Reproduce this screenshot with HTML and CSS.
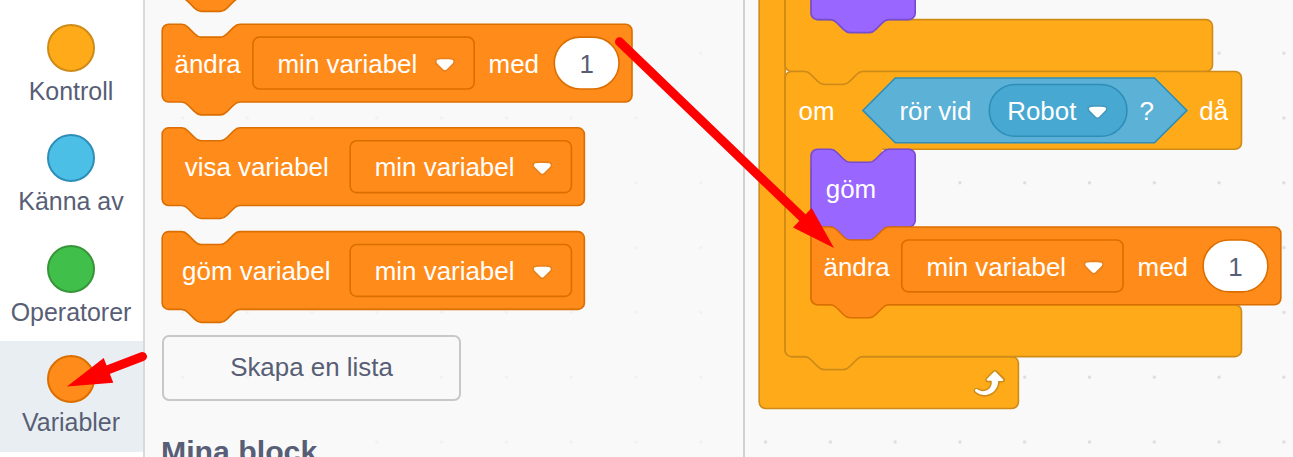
FILE: index.html
```html
<!DOCTYPE html>
<html lang="sv">
<head>
<meta charset="utf-8">
<title>Scratch</title>
<link rel="stylesheet" href="styles.css">
</head>
<body>
<svg class="defs" width="0" height="0" aria-hidden="true">
  <defs>
    <g id="arrow">
      <path class="arrow-edge" d="M12.71,2.44A2.41,2.41,0,0,1,12,4.16L8.08,8.08a2.45,2.45,0,0,1-3.45,0L0.72,4.16A2.42,2.42,0,0,1,0,2.44,2.48,2.48,0,0,1,.71.71C1,0.47,1.43,0,6.36,0S11.75,0.46,12,.71A2.44,2.44,0,0,1,12.71,2.44Z"/>
      <path class="arrow-fill" d="M6.36,7.79a1.43,1.43,0,0,1-1-.42L1.42,3.45a1.44,1.44,0,0,1,0-2c0.56-.56,9.31-0.56,9.87,0a1.44,1.44,0,0,1,0,2L7.37,7.37A1.43,1.43,0,0,1,6.36,7.79Z"/>
    </g>
    <path id="wide" d="M0,4A4,4 0 0,1 4,0H12c2,0 3,1 4,2l4,4c1,1 2,2 4,2h12c2,0 3,-1 4,-2l4,-4c1,-1 2,-2 4,-2H286a4,4 0 0,1 4,4v40a4,4 0 0,1 -4,4H48c-2,0 -3,1 -4,2l-4,4c-1,1 -2,2 -4,2h-12c-2,0 -3,-1 -4,-2l-4,-4c-1,-1 -2,-2 -4,-2H4a4,4 0 0,1 -4,-4z"/>
    <path id="medium" d="M0,4A4,4 0 0,1 4,0H12c2,0 3,1 4,2l4,4c1,1 2,2 4,2h12c2,0 3,-1 4,-2l4,-4c1,-1 2,-2 4,-2H256.6a4,4 0 0,1 4,4v40a4,4 0 0,1 -4,4H48c-2,0 -3,1 -4,2l-4,4c-1,1 -2,2 -4,2h-12c-2,0 -3,-1 -4,-2l-4,-4c-1,-1 -2,-2 -4,-2H4a4,4 0 0,1 -4,-4z"/>
    <path id="small" d="M0,4A4,4 0 0,1 4,0H12c2,0 3,1 4,2l4,4c1,1 2,2 4,2h12c2,0 3,-1 4,-2l4,-4c1,-1 2,-2 4,-2H60.3a4,4 0 0,1 4,4v40a4,4 0 0,1 -4,4H48c-2,0 -3,1 -4,2l-4,4c-1,1 -2,2 -4,2h-12c-2,0 -3,-1 -4,-2l-4,-4c-1,-1 -2,-2 -4,-2H4a4,4 0 0,1 -4,-4z"/>
  </defs>
</svg>

<main class="editor">
  <nav class="categories">
    <div class="category"><span class="bubble control"></span><span class="name">Kontroll</span></div>
    <div class="category"><span class="bubble sensing"></span><span class="name">Känna av</span></div>
    <div class="category"><span class="bubble operators"></span><span class="name">Operatorer</span></div>
    <div class="category selected"><span class="bubble variables"></span><span class="name">Variabler</span></div>
  </nav>

  <section class="palette">
    <svg class="block clipped" width="480" height="23">
      <g transform="translate(1.2 -79.4) scale(1.62)"><use href="#wide" class="data"/></g>
    </svg>
    <svg class="block" width="480" height="104">
      <g transform="translate(1.2 1.2) scale(1.62)">
        <use href="#wide" class="data"/>
        <text x="7.6" y="30">ändra</text>
        <rect class="data" x="56" y="8" width="136.6" height="32" rx="4"/>
        <text x="71.2" y="30">min variabel</text>
        <use href="#arrow" transform="translate(168.3 20.7) scale(.98)"/>
        <text x="201.5" y="30">med</text>
        <rect class="input" x="242" y="8" width="40" height="32" rx="16"/>
        <text class="value" x="262" y="30">1</text>
      </g>
    </svg>
    <svg class="block" width="480" height="104">
      <g transform="translate(1.2 .8) scale(1.62)">
        <use href="#medium" class="data"/>
        <text x="13.9" y="30">visa variabel</text>
        <rect class="data" x="116" y="8" width="136.6" height="32" rx="4"/>
        <text x="131.2" y="30">min variabel</text>
        <use href="#arrow" transform="translate(228.4 20.7) scale(.98)"/>
      </g>
    </svg>
    <svg class="block" width="480" height="103">
      <g transform="translate(1.2 .6) scale(1.62)">
        <use href="#medium" class="data"/>
        <text x="12.3" y="30">göm variabel</text>
        <rect class="data" x="116" y="8" width="136.6" height="32" rx="4"/>
        <text x="131.2" y="30">min variabel</text>
        <use href="#arrow" transform="translate(228.4 20.7) scale(.98)"/>
      </g>
    </svg>
    <button class="make-list">Skapa en lista</button>
    <h2 class="heading">Mina block</h2>
  </section>

  <section class="workspace">
    <svg class="script" width="548" height="457">
      <g transform="translate(14.2 71.5) scale(1.62)">
        <path class="ctl" d="M0,-60V204a4,4 0 0,0 4,4H156a4,4 0 0,0 4,-4V180a4,4 0 0,0 -4,-4H20a4,4 0 0,1 -4,-4V-60z"/>
        <g transform="translate(128.3 180)">
          <path class="loop-edge" d="M23.3,11c-0.3,0.6-0.9,1-1.5,1h-1.6c-0.1,1.3-0.5,2.5-1.1,3.6c-0.9,1.7-2.3,3.2-4.1,4.1c-1.7,0.9-3.6,1.2-5.5,0.9c-1.8-0.3-3.5-1.1-4.9-2.3c-0.7-0.7-0.7-1.9,0-2.6c0.6-0.6,1.6-0.7,2.3-0.2H7c0.9,0.6,1.9,0.9,2.9,0.9s1.9-0.3,2.7-0.9c1.1-0.8,1.8-2.1,1.8-3.5h-1.5c-0.9,0-1.7-0.7-1.7-1.7c0-0.4,0.2-0.9,0.5-1.2l4.4-4.4c0.7-0.6,1.7-0.6,2.4,0L23,9.2C23.5,9.7,23.6,10.4,23.3,11z"/>
          <path class="arrow-fill" d="M21.8,11h-2.6c0,1.5-0.3,2.9-1,4.2c-0.8,1.6-2.1,2.8-3.7,3.6c-1.5,0.8-3.3,1.1-4.9,0.8c-1.6-0.2-3.2-1-4.4-2.1c-0.4-0.3-0.4-0.9-0.1-1.2c0.3-0.4,0.9-0.4,1.2-0.1l0,0c1,0.7,2.2,1.1,3.4,1.1s2.3-0.3,3.3-1c0.9-0.6,1.6-1.5,2-2.6c0.3-0.9,0.4-1.8,0.2-2.8h-2.4c-0.4,0-0.7-0.3-0.7-0.7c0-0.2,0.1-0.3,0.2-0.4l4.4-4.4c0.3-0.3,0.7-0.3,0.9,0L22,9.8c0.3,0.3,0.4,0.6,0.3,0.9S22,11,21.8,11z"/>
        </g>
        <g transform="translate(16 0)">
          <path class="ctl" d="M0,-60V-4a4,4 0 0,0 4,4H12c2,0 3,1 4,2l4,4c1,1 2,2 4,2h12c2,0 3,-1 4,-2l4,-4c1,-1 2,-2 4,-2H259.8a4,4 0 0,0 4,-4V-28a4,4 0 0,0 -4,-4H20a4,4 0 0,1 -4,-4V-60z"/>
          <use href="#small" class="looks" transform="translate(16 -80)"/>
          <path class="ctl" d="M0,4A4,4 0 0,1 4,0H12c2,0 3,1 4,2l4,4c1,1 2,2 4,2h12c2,0 3,-1 4,-2l4,-4c1,-1 2,-2 4,-2H277.7a4,4 0 0,1 4,4v40a4,4 0 0,1 -4,4H20a4,4 0 0,0 -4,4V140a4,4 0 0,0 4,4H277.7a4,4 0 0,1 4,4v24a4,4 0 0,1 -4,4H48c-2,0 -3,1 -4,2l-4,4c-1,1 -2,2 -4,2h-12c-2,0 -3,-1 -4,-2l-4,-4c-1,-1 -2,-2 -4,-2H4a4,4 0 0,1 -4,-4z"/>
          <path class="ctl-fill" d="M15,47H60V60H15z"/>
          <text x="8.3" y="30.1">om</text>
          <path class="sense" d="M68,4H228l20,20l-20,20H68l-20,-20z"/>
          <text x="70.6" y="30.1">rör vid</text>
          <rect class="sense menu" x="126" y="8" width="85" height="32" rx="16"/>
          <text x="137.1" y="30.1">Robot</text>
          <use href="#arrow" transform="translate(186.6 20.7) scale(.98)"/>
          <text x="218.8" y="30.1">?</text>
          <text x="255.7" y="30.1">då</text>
          <g transform="translate(16 48)">
            <use href="#small" class="looks"/>
            <text x="9.1" y="30.1">göm</text>
          </g>
          <g transform="translate(16 96)">
            <use href="#wide" class="data"/>
            <text x="7.7" y="30.1">ändra</text>
            <rect class="data" x="56" y="8" width="136.6" height="32" rx="4"/>
            <text x="71.2" y="30.1">min variabel</text>
            <use href="#arrow" transform="translate(168.3 20.7) scale(.98)"/>
            <text x="201.6" y="30.1">med</text>
            <rect class="input" x="242" y="8" width="40" height="32" rx="16"/>
            <text class="value" x="262" y="30.1">1</text>
          </g>
        </g>
      </g>
    </svg>
  </section>

  <svg class="pointers" width="1293" height="457" aria-hidden="true">
    <path class="shaft" d="M619.5,41.8L806,221M142.5,356.5L106,370.5"/>
    <path class="head" d="M834,248L811.7,208L793,227.5zM67,386.4L103.7,358L113.3,382.7z"/>
  </svg>
</main>
</body>
</html>
```
FILE: styles.css
```css
body {
  margin: 0;
  font-family: "Liberation Sans", Arial, sans-serif;
  color: #575e75;
  overflow: hidden;
}

.defs {
  position: absolute;
}

.editor {
  position: relative;
  display: grid;
  grid-template-columns: 145px 600px 1fr;
  height: 457px;
  overflow: hidden;
  background: #f9f9f9;
}

/* Category list */
.categories {
  box-sizing: border-box;
  padding-top: 9.6px;
  background: #fff;
  border-right: 2px solid #d9d9d9;
}

.category {
  box-sizing: border-box;
  height: 110.5px;
  padding: 14px 1px 0 0;
  display: flex;
  flex-direction: column;
  align-items: center;
}

.selected {
  background: #e9eef2;
}

.bubble {
  box-sizing: border-box;
  width: 48px;
  height: 48px;
  border: 2px solid;
  border-radius: 50%;
}

.control { background: #ffab19; border-color: #cf8b17; }
.sensing { background: #4cbfe6; border-color: #2e8eb8; }
.operators { background: #40bf4a; border-color: #389438; }
.variables { background: #ff8c1a; border-color: #db6e00; }

.name {
  margin-top: 5.4px;
  font-size: 24.96px;
  line-height: 29px;
  white-space: nowrap;
}

/* Block palette */
.palette {
  box-sizing: border-box;
  padding-left: 16px;
  border-right: 2px solid #d0d0d0;
  background: radial-gradient(circle, #f1f1f1 1.2px, transparent 1.8px) 5px 20.8px / 64.8px 64.8px;
}

.block {
  display: block;
  overflow: visible;
}

.clipped {
  overflow: hidden;
}

.make-list {
  box-sizing: border-box;
  display: block;
  width: 299px;
  height: 66px;
  margin: 1px 0 0 1px;
  padding: 0 0 1px;
  border: 2px solid #c8c8c8;
  border-radius: 7px;
  background: transparent;
  color: #575e75;
  font: 25.92px "Liberation Sans", Arial, sans-serif;
}

.heading {
  margin: 34px 0 0;
  font-size: 30.24px;
  line-height: 34px;
}

/* Script area */
.workspace {
  background: radial-gradient(circle, #dcdcdc 1.3px, transparent 1.9px) -11.9px 20.8px / 64.8px 64.8px;
}

.script {
  display: block;
}

.data { fill: #ff8c1a; stroke: #db6e00; }
.looks { fill: #96f; stroke: #774dcb; }
.ctl { fill: #ffab19; stroke: #cf8b17; }
.ctl-fill { fill: #ffab19; }
.sense { fill: #5cb1d6; stroke: #2e8eb8; }
.menu { fill: #47a8d1; }
.input { fill: #fff; stroke: #db6e00; }
.arrow-edge { fill: #231f20; opacity: .1; }
.arrow-fill { fill: #fff; }
.loop-edge { fill: #cf8b17; }

text {
  fill: #fff;
  font-size: 16px;
}

.value {
  fill: #575e75;
  text-anchor: middle;
}

/* Red pointers drawn over the editor */
.pointers {
  position: absolute;
  left: 0;
  top: 0;
}

.shaft {
  fill: none;
  stroke: #f00;
  stroke-width: 9px;
  stroke-linecap: round;
}

.head {
  fill: #f00;
}
```
